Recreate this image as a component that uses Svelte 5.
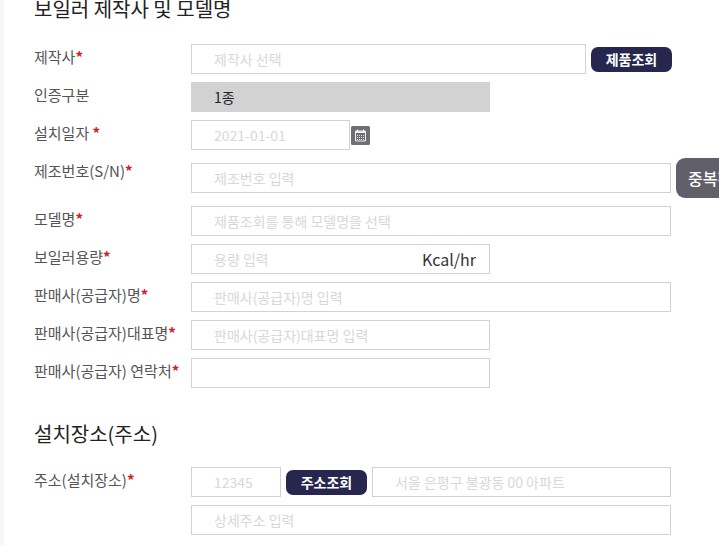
<script lang="ts">
  const maker = [
    { label: '제작사', req: '*', ph: '제작사 선택', kind: 'search' },
    { label: '인증구분', value: '1종', kind: 'grade' },
    { label: '설치일자 ', req: '*', ph: '2021-01-01', kind: 'date' },
    { label: '제조번호(S/N)', req: '*', ph: '제조번호 입력', kind: 'serial' },
    { label: '모델명', req: '*', ph: '제품조회를 통해 모델명을 선택', kind: 'full' },
    { label: '보일러용량', req: '*', ph: '용량 입력', kind: 'capacity' },
    { label: '판매사(공급자)명', req: '*', ph: '판매사(공급자)명 입력', kind: 'full' },
    { label: '판매사(공급자)대표명', req: '*', ph: '판매사(공급자)대표명 입력', kind: 'half' },
    { label: '판매사(공급자) 연락처', req: '*', ph: '', kind: 'half' },
  ];
</script>

<div class="page">
  <h2 class="first">보일러 제작사 및 모델명</h2>

  <div class="rows">
    {#each maker as row}
      <div class="row">
        <span class="label">{row.label}<b>{row.req}</b></span>
        {#if row.kind === 'search'}
          <div class="line">
            <input class="w395" placeholder={row.ph} />
            <button class="btn">제품조회</button>
          </div>
        {:else if row.kind === 'grade'}
          <div class="grade">{row.value}</div>
        {:else if row.kind === 'date'}
          <div class="line tight">
            <input class="w159" placeholder={row.ph} />
            <span class="cal">
              <svg width="19" height="19" viewBox="0 0 19 19">
                <rect width="19" height="19" rx="1.5" fill="#6e6e74" />
                <path d="M4.5 5h10v10h-10z" fill="none" stroke="#eee" />
                <path d="M4.5 6h10" stroke="#eee" stroke-width="2" />
                <path d="M6.5 3.5v2M12.5 3.5v2" stroke="#fff" />
                <path d="M6 9.5h7M6 11.5h7M6 13.5h7" stroke="#ddd" stroke-dasharray="1 1" />
              </svg>
            </span>
          </div>
        {:else if row.kind === 'serial'}
          <div class="line">
            <input class="w480" placeholder={row.ph} />
            <button class="dup">중복확인</button>
          </div>
        {:else if row.kind === 'capacity'}
          <div class="capacity">
            <input class="w299" placeholder={row.ph} />
            <span class="unit">Kcal/hr</span>
          </div>
        {:else if row.kind === 'half'}
          <input class="w299" placeholder={row.ph} />
        {:else}
          <input class="w480" placeholder={row.ph} />
        {/if}
      </div>
    {/each}
  </div>

  <h2 class="second">설치장소(주소)</h2>

  <div class="row">
    <span class="label">주소(설치장소)<b>*</b></span>
    <div class="stack">
      <div class="line">
        <input class="zip" placeholder="12345" />
        <button class="btn">주소조회</button>
        <input class="addr" placeholder="서울 은평구 불광동 00 아파트" />
      </div>
      <input class="w480" placeholder="상세주소 입력" />
    </div>
  </div>
</div>

<style>
  :global(body) {
    margin: 0;
    background: #fff;
    overflow: hidden;
  }
  .page {
    width: 719px;
    height: 545px;
    box-sizing: border-box;
    overflow: hidden;
    padding-left: 30px;
    border-left: 4px solid #f7f7f7;
    font-family: "Noto Sans CJK KR", "Noto Sans", sans-serif;
    color: #555;
  }
  h2 {
    margin: 0;
    font-size: 20px;
    font-weight: 400;
    line-height: 26px;
    color: #222;
  }
  .first { margin-top: -4px; }
  .second { margin-top: 33px; margin-bottom: 20px; }
  .rows {
    margin-top: 22px;
    display: flex;
    flex-direction: column;
    gap: 8px;
  }
  .row {
    display: grid;
    grid-template-columns: 157px 1fr;
    align-items: start;
  }
  .label {
    font-size: 15px;
    line-height: 26px;
    color: #555;
    white-space: nowrap;
  }
  .label b { color: #d32020; font-weight: 700; }
  input {
    box-sizing: border-box;
    height: 30px;
    border: 1px solid #d2d2d2;
    padding: 0 22px;
    margin: 0;
    font: 400 14px "Noto Sans CJK KR", sans-serif;
    background: #fff;
    outline: none;
  }
  input::placeholder { color: #d8d8d8; opacity: 1; }
  .w159 { width: 159px; }
  .w299 { width: 299px; }
  .w395 { width: 395px; }
  .w480 { width: 480px; }
  .zip { width: 90px; }
  .addr { width: 299px; }
  .line {
    display: flex;
    align-items: center;
    gap: 5px;
  }
  .line.tight { gap: 1px; }
  .stack {
    display: flex;
    flex-direction: column;
    gap: 8px;
  }
  .grade {
    box-sizing: border-box;
    width: 299px;
    height: 30px;
    padding-left: 23px;
    background: #d2d2d2;
    font-size: 14px;
    line-height: 30px;
    color: #222;
  }
  .btn {
    flex: none;
    width: 81px;
    height: 25px;
    padding: 0;
    border: 0;
    border-radius: 7px;
    background: #26264e;
    color: #fff;
    font: 700 14px "Noto Sans CJK KR", sans-serif;
  }
  .cal { display: flex; }
  .dup {
    flex: none;
    width: 90px;
    height: 40px;
    padding: 0 0 0 12px;
    text-align: left;
    border: 0;
    border-radius: 9px;
    background: #60606a;
    color: #fff;
    font: 500 16px "Noto Sans CJK KR", sans-serif;
    white-space: nowrap;
  }
  .capacity {
    position: relative;
    width: 299px;
  }
  .unit {
    position: absolute;
    right: 14px;
    top: 0;
    font-size: 16px;
    line-height: 30px;
    color: #333;
  }
</style>
